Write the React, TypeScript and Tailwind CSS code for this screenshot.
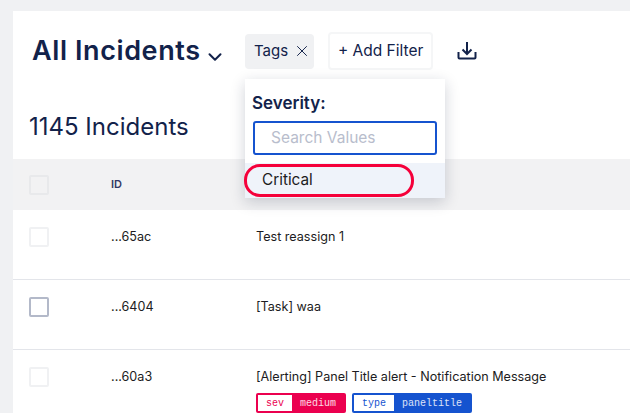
import { ChevronDown, X } from 'lucide-react';

const font = { fontFamily: '"Inter", "Liberation Sans", sans-serif' };

const Check = ({ dark, head }: { dark?: boolean; head?: boolean }) => (
  <div className={`w-5 h-5 rounded-[2px] border-2 ${dark ? 'border-[#b3b9c9]' : head ? 'border-[#e8e9eb]' : 'border-[#f0f1f3]'}`} />
);

const Tag = ({ name, value, bg, text }: { name: string; value: string; bg: string; text: string }) => (
  <div className={`flex items-center h-5 rounded-[2px] p-0.5 font-['Liberation_Mono',monospace] text-[10px] ${bg}`}>
    <span className={`flex items-center h-4 px-2 bg-white ${text}`}>{name}</span>
    <span className="px-2 text-white/85">{value}</span>
  </div>
);

const Row = ({ id, title, dark, tags, border = true }: { id: string; title: string; dark?: boolean; tags?: boolean; border?: boolean }) => (
  <div className={`flex h-[70px] pt-[17px] ${border ? 'border-b-[1px] border-[#e3e5ea]' : ''}`}>
    <div className="w-[98px] pl-4"><Check dark={dark} /></div>
    <div className="w-[145px] text-[12.6px] leading-5 text-[#1c1c22]">{id}</div>
    <div className="flex flex-col gap-1.5">
      <div className="text-[12.6px] leading-5 text-[#1c1c22]">{title}</div>
      {tags && (
        <div className="flex gap-1.5">
          <Tag name="sev" value="medium" bg="bg-[#eb004f]" text="text-[#eb004f]" />
          <Tag name="type" value="paneltitle" bg="bg-[#1553cf]" text="text-[#1553cf]" />
        </div>
      )}
    </div>
  </div>
);

export default function App() {
  return (
    <div style={font} className="w-[630px] h-[413px] overflow-hidden bg-[#f0f1f3] pl-[13px] pt-[11px]">
      <div className="relative h-[402px] bg-white">
        <div className="flex items-center h-[80px] pl-[19px] text-[#12224a]">
          <h1 className="w-[167px] shrink-0 whitespace-nowrap text-[27px] font-semibold tracking-[0.6px]">All Incidents</h1>
          <ChevronDown className="ml-[5px] mt-[11px] w-[22px] h-[22px]" strokeWidth={2.2} />
          <div className="flex items-center gap-[5px] h-[35px] ml-[19px] pl-[9px] pr-[3px] rounded bg-[#f0f1f3] text-[15px]">
            Tags <X className="w-[18px] h-[18px]" strokeWidth={1.3} />
          </div>
          <div className="flex items-center justify-center w-[105px] h-[38px] ml-[14px] rounded border-2 border-[#f5f6f7] text-[15.5px]">
            + Add Filter
          </div>
          <svg className="ml-[24px] w-5 h-5" viewBox="0 0 20 20" fill="none" stroke="currentColor" strokeWidth="2">
            <path d="M1.5 11v5.5a1 1 0 0 0 1 1h15a1 1 0 0 0 1-1V11" />
            <path d="M10 1v12M5.5 8.5 10 13l4.5-4.5" />
          </svg>
        </div>
        <div className="h-[68px] pl-4 pt-[20px] text-[24px] leading-8 text-[#12224a]">1145 Incidents</div>
        <div className="flex items-center h-[51px] bg-[#f2f2f3]">
          <div className="w-[98px] pl-4"><Check head /></div>
          <div className="text-[11px] font-semibold text-[#323a63]">ID</div>
        </div>
        <Row id="...65ac" title="Test reassign 1" />
        <Row id="...6404" title="[Task] waa" dark />
        <Row id="...60a3" title="[Alerting] Panel Title alert - Notification Message" tags border={false} />

        <div className="absolute left-[232px] top-[68px] w-[200px] h-[119px] bg-white shadow-[0_4px_14px_rgba(20,30,60,0.2)]">
          <div className="px-[7px] pt-[12px] text-[17px] font-semibold leading-6 text-[#12224a]">Severity:</div>
          <div className="flex items-center mx-2 mt-[6px] h-[34px] pl-4 rounded-[3px] border-2 border-[#1553cf] text-[15.5px] text-[#b8bdcc]">
            Search Values
          </div>
          <div className="flex items-center mt-2 h-[35px] pl-[17px] bg-[#eff3fa] text-[15.3px] text-[#1c1c22]">Critical</div>
          <div className="absolute left-[-1px] top-[85px] w-[170px] h-[33px] rounded-[16px] border-[3px] border-[#f5003a]" />
        </div>
      </div>
    </div>
  );
}
